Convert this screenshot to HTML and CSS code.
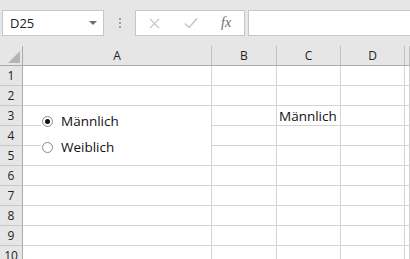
FILE: index.html
```html
<!DOCTYPE html>
<html lang="de">
<head>
  <meta charset="UTF-8" />
  <title>Mappe1 - Excel</title>
  <link rel="stylesheet" href="styles.css">
</head>
<body>
  <div class="formula-bar">
    <div class="name-box">
      <span>D25</span>
      <svg class="drop" viewBox="0 0 8 4"><path d="M0 0h8L4 4z" /></svg>
    </div>
    <div class="grip"><i></i><i></i><i></i></div>
    <div class="fx-box">
      <svg class="btn-x" viewBox="0 0 12 12"><path d="M1 1l10 10M11 1L1 11" /></svg>
      <svg class="btn-ok" viewBox="0 0 14 12"><path d="M1 6.5l4 4L13 1.5" /></svg>
      <span class="fx">fx</span>
    </div>
    <div class="formula-input"></div>
  </div>

  <div class="sheet">
    <div class="corner"><svg viewBox="0 0 12 12"><path d="M12 0v12H0z" /></svg></div>
    <div class="col-head">A</div>
    <div class="col-head">B</div>
    <div class="col-head">C</div>
    <div class="col-head">D</div>
    <div class="col-head"></div>
  </div>

  <div class="sheet rows" id="rows"></div>

  <!-- Optionsfelder (Formularsteuerelement) -->
  <div class="option-group">
    <label class="option"><span class="radio checked"></span>Männlich</label>
    <label class="option"><span class="radio"></span>Weiblich</label>
  </div>

  <script>
    const rows = document.getElementById('rows');
    for (let r = 1; r <= 10; r++) {
      const head = document.createElement('div');
      head.className = 'row-head';
      head.textContent = r;
      rows.appendChild(head);
      for (let c = 0; c < 5; c++) {
        const cell = document.createElement('div');
        cell.className = 'cell';
        if (r === 3 && c === 2) cell.textContent = 'Männlich';
        rows.appendChild(cell);
      }
    }
  </script>
</body>
</html>
```

FILE: styles.css
```css
body {
  margin: 0;
  width: 410px;
  height: 259px;
  overflow: hidden;
  background: #fff;
  font-family: 'Open Sans', 'Noto Sans', sans-serif;
  color: #000;
  position: relative;
}
.formula-bar {
  height: 46px;
  background: #e6e6e6;
  display: flex;
  align-items: flex-start;
  padding: 10px 0 0 2px;
  box-sizing: border-box;
}
.name-box {
  width: 102px;
  height: 26px;
  box-sizing: border-box;
  background: #fff;
  border: 1px solid #c6c6c6;
  display: flex;
  align-items: center;
  justify-content: space-between;
  padding: 0 6px 0 7px;
  font-size: 13px;
  color: #222;
}
.name-box .drop {
  width: 8px;
  height: 4px;
  fill: #6e6e6e;
}
.grip {
  width: 31px;
  height: 26px;
  display: flex;
  flex-direction: column;
  align-items: center;
  justify-content: center;
  gap: 2px;
}
.grip i {
  width: 2px;
  height: 2px;
  background: #a0a0a0;
}
.fx-box {
  width: 110px;
  height: 26px;
  box-sizing: border-box;
  background: #fff;
  border: 1px solid #c6c6c6;
  display: flex;
  align-items: center;
  padding: 0 0 0 13px;
}
.fx-box svg {
  fill: none;
  stroke: #c3c3c3;
  stroke-width: 1.4;
}
.btn-x {
  width: 11px;
  height: 11px;
}
.btn-ok {
  width: 14px;
  height: 12px;
  margin-left: 24px;
}
.fx {
  font-family: 'Liberation Serif', serif;
  font-style: italic;
  font-size: 14px;
  color: #6a6a6a;
  margin-left: 23px;
}
.formula-input {
  flex: 1;
  height: 26px;
  box-sizing: border-box;
  background: #fff;
  border: 1px solid #c6c6c6;
  border-right: none;
  margin-left: 3px;
}
.sheet {
  display: grid;
  grid-template-columns: 23px 189px 65px 64px 64px 1fr;
}
.sheet > div {
  box-sizing: border-box;
  height: 20px;
  border-right: 1px solid #d4d4d4;
  border-bottom: 1px solid #d4d4d4;
}
.corner,
.col-head {
  background: #e6e6e6;
}
.sheet > .corner,
.sheet > .col-head {
  height: 20px;
  border-bottom: 1px solid #ababab;
  border-right: 1px solid #c0c0c0;
}
.sheet > .corner {
  border-right-color: #ababab;
  display: flex;
  align-items: flex-end;
  justify-content: flex-end;
  padding: 0 2px 2px 0;
}
.corner svg {
  width: 12px;
  height: 12px;
  fill: #b4b4b4;
}
.col-head {
  font-size: 12px;
  text-align: center;
  line-height: 19px;
  color: #222;
}
.sheet > .row-head {
  background: #e6e6e6;
  border-right: 1px solid #ababab;
  border-bottom: 1px solid #c8c8c8;
  font-size: 12px;
  line-height: 19px;
  text-align: center;
  color: #222;
}
.cell {
  font-size: 13.5px;
  line-height: 19px;
  padding: 1px 0 0 2px;
  white-space: nowrap;
  color: #111;
}
.option-group {
  position: absolute;
  left: 41px;
  top: 107px;
  width: 170px;
  height: 57px;
  background: #fff;
  display: flex;
  flex-direction: column;
  padding-top: 4px;
  box-sizing: border-box;
  gap: 6px;
}
.option {
  display: flex;
  align-items: center;
  font-size: 13.5px;
  height: 20px;
  color: #111;
}
.radio {
  width: 11px;
  height: 11px;
  box-sizing: border-box;
  border: 1px solid #8a8a8a;
  border-radius: 50%;
  margin: 0 8px 0 1px;
  display: flex;
  align-items: center;
  justify-content: center;
}
.radio.checked::after {
  content: '';
  width: 5px;
  height: 5px;
  border-radius: 50%;
  background: #111;
}
```
